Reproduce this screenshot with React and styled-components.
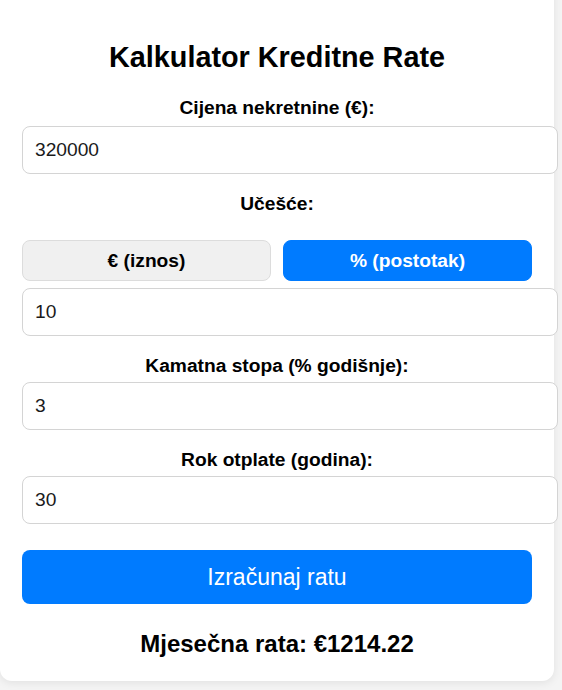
import React, { useState } from "react";
import styled, { createGlobalStyle } from "styled-components";

const GlobalStyle = createGlobalStyle`
  html, body {
    margin: 0;
    padding: 0;
    background: #f4f4f4;
    font-family: "Liberation Sans", Arial, sans-serif;
    overflow: hidden;
  }
`;

const Page = styled.div`
  width: 562px;
  height: 690px;
  overflow: hidden;
`;

const Card = styled.div`
  width: 510px;
  margin-top: -20px;
  padding: 61px 22px 23px 22px;
  background: #fff;
  border-radius: 12px;
  box-shadow: 0 2px 8px rgba(0, 0, 0, 0.08);
`;

const Title = styled.h2`
  margin: 0 0 23px 0;
  font-size: 28.8px;
  line-height: 33px;
  font-weight: bold;
  text-align: center;
  color: #000;
`;

const Label = styled.label`
  display: block;
  margin: ${(p) => (p.$first ? "0" : "19px")} 0 ${(p) => (p.$gap || 5)}px 0;
  font-size: 19.2px;
  line-height: 22px;
  font-weight: bold;
  text-align: center;
  color: #000;
`;

const Input = styled.input`
  display: block;
  width: 100%;
  height: 46px;
  padding: 0 12px;
  margin: 0;
  border: 1px solid #d4d4d4;
  border-radius: 8px;
  font-family: "Liberation Sans", Arial, sans-serif;
  font-size: 19.2px;
  color: #1a1a1a;
  background: #fff;
  outline: none;
`;

const Toggle = styled.div`
  display: flex;
  gap: 12px;
  margin-bottom: 7px;
`;

const ToggleButton = styled.button`
  flex: 1;
  height: 41px;
  border-radius: 8px;
  border: 1px solid ${(p) => (p.$active ? "#007bff" : "#dcdcdc")};
  background: ${(p) => (p.$active ? "#007bff" : "#f0f0f0")};
  color: ${(p) => (p.$active ? "#fff" : "#000")};
  font-family: "Liberation Sans", Arial, sans-serif;
  font-size: 19.2px;
  font-weight: bold;
  cursor: pointer;
`;

const CalcButton = styled.button`
  display: block;
  width: 100%;
  height: 54px;
  margin-top: 26px;
  border: none;
  border-radius: 8px;
  background: #007bff;
  color: #fff;
  font-family: "Liberation Sans", Arial, sans-serif;
  font-size: 23px;
  cursor: pointer;
`;

const Result = styled.div`
  margin-top: 26px;
  font-size: 24px;
  line-height: 28px;
  font-weight: bold;
  text-align: center;
  color: #000;
`;

const App = () => {
  const [price, setPrice] = useState("320000");
  const [mode, setMode] = useState("percent");
  const [down, setDown] = useState("10");
  const [rate, setRate] = useState("3");
  const [years, setYears] = useState("30");
  const [result, setResult] = useState("1214.22");

  const calculate = () => {
    const p = parseFloat(price) || 0;
    const d = parseFloat(down) || 0;
    const principal = mode === "percent" ? p - (p * d) / 100 : p - d;
    const r = (parseFloat(rate) || 0) / 100 / 12;
    const n = (parseFloat(years) || 0) * 12;
    const m = r === 0 ? principal / n : (principal * r) / (1 - Math.pow(1 + r, -n));
    setResult(m.toFixed(2));
  };

  return (
    <Page>
      <GlobalStyle />
      <Card>
        <Title>Kalkulator Kreditne Rate</Title>
        <Label $first $gap={7}>Cijena nekretnine (€):</Label>
        <Input value={price} onChange={(e) => setPrice(e.target.value)} />
        <Label $gap={25}>Učešće:</Label>
        <Toggle>
          <ToggleButton $active={mode === "amount"} onClick={() => setMode("amount")}>
            € (iznos)
          </ToggleButton>
          <ToggleButton $active={mode === "percent"} onClick={() => setMode("percent")}>
            % (postotak)
          </ToggleButton>
        </Toggle>
        <Input value={down} onChange={(e) => setDown(e.target.value)} />
        <Label>Kamatna stopa (% godišnje):</Label>
        <Input value={rate} onChange={(e) => setRate(e.target.value)} />
        <Label>Rok otplate (godina):</Label>
        <Input value={years} onChange={(e) => setYears(e.target.value)} />
        <CalcButton onClick={calculate}>Izračunaj ratu</CalcButton>
        <Result>Mjesečna rata: €{result}</Result>
      </Card>
    </Page>
  );
};

export default App;
